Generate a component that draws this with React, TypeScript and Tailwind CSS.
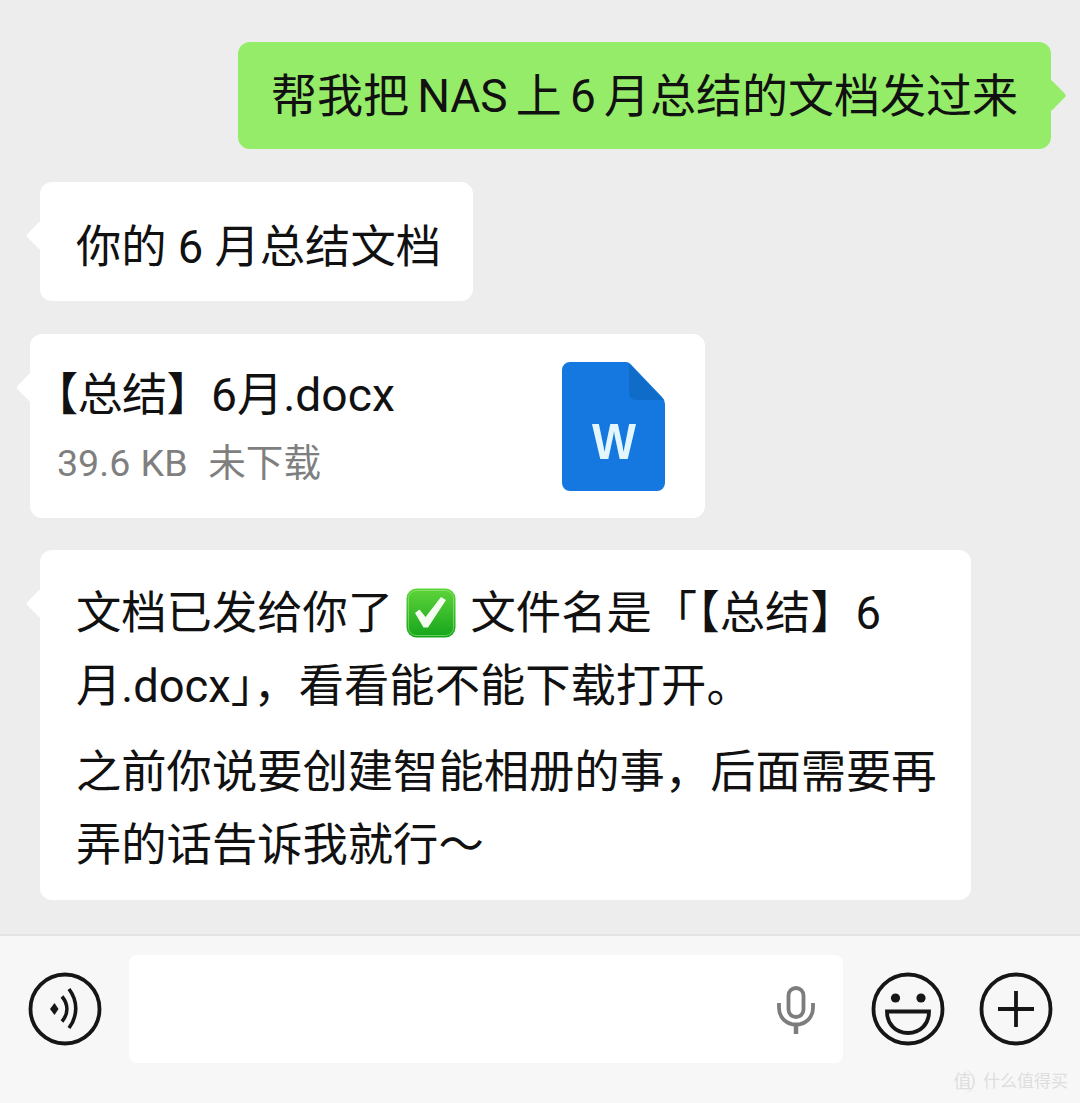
import type { ReactNode } from "react";

const fontStack = "font-['Roboto','Noto_Sans_CJK_SC',sans-serif]";

type BubbleProps = {
  children: ReactNode;
  className?: string;
};

// left-hand incoming message with the little pointer on its edge
const IncomingBubble = ({ children, className = "" }: BubbleProps) => (
  <div className={`relative self-start rounded-xl bg-white ${className}`}>
    <span className="absolute top-[43px] -left-[10px] size-[21px] rotate-45 rounded-[3px] bg-white" />
    <div className="relative">{children}</div>
  </div>
);

const CheckEmoji = () => (
  <svg
    className="mr-[3px] ml-[2px] inline-block align-[-9px]"
    width="50"
    height="50"
    viewBox="0 0 50 50"
  >
    <defs>
      <linearGradient id="checkBox" x1="0" y1="0" x2="0" y2="1">
        <stop offset="0" stopColor="#5fd43a" />
        <stop offset="1" stopColor="#15a51c" />
      </linearGradient>
    </defs>
    <rect x="0.5" y="0.5" width="49" height="49" rx="10" fill="url(#checkBox)" />
    <rect x="2.5" y="2.5" width="45" height="45" rx="8" fill="none" stroke="#a5ec8c" strokeOpacity="0.55" />
    <path d="M9 25l4.500-3.500 6 7.500L35 9l5 3-18 27.500h-4.500z" fill="#f4fbef" />
  </svg>
);

const VoiceIcon = () => (
  <svg width="74" height="74" viewBox="0 0 74 74" fill="none" stroke="#161616">
    <circle cx="37" cy="37" r="34.500" strokeWidth="3.800" />
    <path d="M26.500 31l-4.500 6 4.500 6 4-6z" fill="#161616" stroke="none" />
    <path d="M34 24.500c6.500 8 6.500 17 0 25" strokeWidth="3.600" />
    <path d="M41 17c9 12 9 27 0 39" strokeWidth="3.600" />
  </svg>
);

const MicIcon = () => (
  <svg width="38" height="50" viewBox="0 0 38 50" fill="none" stroke="#7d7d7d" strokeWidth="3.800">
    <rect x="11.500" y="4" width="15" height="29" rx="7.500" />
    <path d="M2 19v5c0 9.500 7.500 16.500 17 16.500S36 33.500 36 24v-5" />
    <path d="M19 40v10" strokeWidth="4.500" />
  </svg>
);

const SmileIcon = () => (
  <svg width="74" height="74" viewBox="0 0 74 74" fill="none" stroke="#161616">
    <circle cx="37" cy="37" r="34.500" strokeWidth="3.800" />
    <circle cx="24.500" cy="26" r="4.600" fill="#161616" stroke="none" />
    <circle cx="50" cy="26" r="4.600" fill="#161616" stroke="none" />
    <path d="M16 39.500h42c0 12.500-8.500 21.500-21 21.500S16 52 16 39.500z" strokeWidth="3.800" />
  </svg>
);

const PlusIcon = () => (
  <svg width="74" height="74" viewBox="0 0 74 74" fill="none" stroke="#161616">
    <circle cx="37" cy="37" r="34.500" strokeWidth="3.800" />
    <path d="M19 37h36M37 19v36" strokeWidth="3.800" />
  </svg>
);

const WordFileIcon = () => (
  <svg width="103" height="129" viewBox="0 0 103 129">
    <path
      d="M8 0h56a6 6 0 0 1 4.500 2L100 35a10 10 0 0 1 3 7v79a8 8 0 0 1-8 8H8a8 8 0 0 1-8-8V8a8 8 0 0 1 8-8z"
      fill="#1578e0"
    />
    <path d="M67 2l35 36H74a7 7 0 0 1-7-7z" fill="#106cc9" />
    <text
      x="52"
      y="97"
      textAnchor="middle"
      textLength="44"
      lengthAdjust="spacingAndGlyphs"
      fontFamily="'Liberation Sans', sans-serif"
      fontWeight="700"
      fontSize="50"
      fill="#e3f6fd"
    >
      W
    </text>
  </svg>
);

export default function App() {
  return (
    <div className={`flex h-[1103px] w-[1080px] flex-col overflow-hidden bg-[#ededed] ${fontStack}`}>
      <div className="flex h-[934px] shrink-0 flex-col pt-[42px] pl-[40px] text-[45.3px] text-[#111]">
        {/* outgoing request */}
        <div className="relative ml-[198px] flex h-[107px] w-[813px] items-center justify-center rounded-xl bg-[#95ec69] pt-[2px]">
          <span className="absolute top-[42px] -right-[11px] size-[23px] rotate-45 rounded-[3px] bg-[#95ec69]" />
          <span className="relative text-[46px] [word-spacing:-3.25px] whitespace-nowrap">
            帮我把 NAS 上 6 月总结的文档发过来
          </span>
        </div>

        <IncomingBubble className="mt-[33px] h-[119px] w-[433px]">
          <div className="flex h-[119px] items-center pt-[13px] pl-[36px]">
            <span className="whitespace-nowrap">你的 6 月总结文档</span>
          </div>
        </IncomingBubble>

        {/* file card */}
        <IncomingBubble className="mt-[33px] -ml-[10px] h-[184px] w-[675px]">
          <div className="flex h-[184px] items-center justify-between pr-[40px]">
            <div className="flex flex-col pl-[3px]">
              <span className="leading-[62px] whitespace-nowrap">
                <span className="tracking-[-0.8px]">【总结】</span>
                <span className="text-[46.2px]">6月.docx</span>
              </span>
              <span className="mt-[11px] pl-[24px] text-[37.6px] leading-[50px] text-[#7f7f7f] [word-spacing:1px] whitespace-pre">
                39.6 KB  未下载
              </span>
            </div>
            <WordFileIcon />
          </div>
        </IncomingBubble>

        <IncomingBubble className="mt-[32px] h-[350px] w-[931px]">
          <div className="px-[36px] pt-[27px] leading-[73px] whitespace-nowrap">
            <p>
              文档已发给你了 <CheckEmoji /> 文件名是「【总结】6
            </p>
            <p>月.docx」，看看能不能下载打开。</p>
            <p className="mt-[13px]">之前你说要创建智能相册的事，后面需要再</p>
            <p>弄的话告诉我就行～</p>
          </div>
        </IncomingBubble>
      </div>

      {/* input bar */}
      <div className="relative flex h-[169px] flex-col border-t-2 border-[#e3e3e3] bg-[#f7f7f7]">
        <div className="mt-[19px] flex h-[108px] items-center pl-[28px]">
          <VoiceIcon />
          <div className="ml-[27px] flex h-[108px] w-[714px] items-center justify-end rounded-lg bg-white pr-[28px]">
            <MicIcon />
          </div>
          <div className="ml-[28px]">
            <SmileIcon />
          </div>
          <div className="ml-[34px]">
            <PlusIcon />
          </div>
        </div>
        <div className="absolute right-[12px] bottom-[10px] flex items-center gap-[8px] leading-none text-[#dedede]">
          <span className="flex size-[23px] items-center justify-center rounded-full border-r-2 border-[#e2e2e2] text-[18px]">值</span>
          <span className="text-[17px] whitespace-nowrap">什么值得买</span>
        </div>
      </div>
    </div>
  );
}
